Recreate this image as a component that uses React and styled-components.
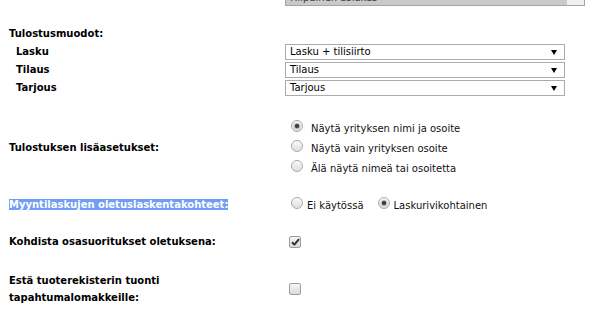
import React from 'react';
import styled, { createGlobalStyle } from 'styled-components';

const Global = createGlobalStyle`
  html, body { margin: 0; padding: 0; background: #fff; }
  body {
    font-family: "DejaVu Sans", Verdana, sans-serif;
    font-size: 10px;
    color: #000;
    overflow: hidden;
  }
`;

const Form = styled.div`
  display: flow-root;
  width: 595px;
  height: 317px;
  overflow: hidden;
  box-sizing: border-box;
  padding-left: 9px;
`;

const Row = styled.div`
  display: grid;
  grid-template-columns: 276px 1fr;
  align-items: center;
  margin-top: ${(p) => p.$gap || 0}px;
  min-height: ${(p) => p.$h || 14}px;
`;

const Label = styled.div`
  font-weight: bold;
  padding-left: ${(p) => p.$indent || 0}px;
  line-height: ${(p) => p.$lh || 14}px;
`;

const Highlight = styled.span`
  background: #6e9ef5;
  color: #fff;
`;

const ListBox = styled.div`
  box-sizing: border-box;
  width: 300px;
  height: 17px;
  border: 1px solid #a5a5a5;
  display: flex;
`;

const ListOption = styled.div`
  flex: 1;
  background: #c9c9c9;
  color: #3a3a3a;
  padding-left: 4px;
  line-height: 15px;
  white-space: nowrap;
  overflow: hidden;
`;

const ScrollTrack = styled.div`
  width: 17px;
  background: #f0f0f0;
`;

const Select = styled.div`
  box-sizing: border-box;
  width: 280px;
  height: 16px;
  border: 1px solid #ababab;
  padding: 0 7px 0 4px;
  display: flex;
  align-items: center;
  justify-content: space-between;
  background: #fff;
  line-height: 14px;
`;

const Arrow = () => (
  <svg width="6" height="5" viewBox="0 0 6 5">
    <polygon points="0,0 6,0 3,5" fill="#000" />
  </svg>
);

const RadioList = styled.div`
  display: flex;
  flex-direction: column;
`;

const Option = styled.label`
  display: flex;
  align-items: center;
  height: ${(p) => p.$h || 20}px;
`;

const Radio = styled.span`
  box-sizing: border-box;
  width: 12px;
  height: 12px;
  border-radius: 50%;
  border: 1px solid #a8a8a8;
  background: linear-gradient(#fafafa, #dcdcdc);
  box-shadow: inset 0 0 1px #fff;
  margin-left: ${(p) => p.$ml ?? 6}px;
  margin-right: ${(p) => p.$mr ?? 8}px;
  margin-bottom: 4px;
  display: flex;
  align-items: center;
  justify-content: center;
  flex: none;
  &::after {
    content: '';
    display: ${(p) => (p.$checked ? 'block' : 'none')};
    width: 4px;
    height: 4px;
    border-radius: 50%;
    background: #3c3c3c;
    box-shadow: 0 0 1.5px 0.5px #6a6a6a;
  }
`;

const OptionText = styled.span`
  color: #111;
  white-space: nowrap;
`;

const InlineOptions = styled.div`
  display: flex;
  align-items: center;
`;

const Check = styled.span`
  box-sizing: border-box;
  width: 12px;
  height: 12px;
  margin-left: 4px;
  border-radius: 2px;
  border: 1px solid #9c9c9c;
  background: linear-gradient(#f6f6f6, #dadada);
  display: flex;
  align-items: center;
  justify-content: center;
`;

const CheckMark = () => (
  <svg width="9" height="8" viewBox="0 0 9 8">
    <path d="M1 4.2 L3.4 6.6 L8 1.2" stroke="#333" strokeWidth="2" fill="none" strokeLinejoin="round" />
  </svg>
);

export default function App() {
  return (
    <>
      <Global />
      <Form>
        <Row $gap={-11} $h={17}>
          <div />
          <ListBox>
            <ListOption>Hilpainen asiakas</ListOption>
            <ScrollTrack />
          </ListBox>
        </Row>

        <Row $gap={21} $h={14}>
          <Label>Tulostusmuodot:</Label>
          <div />
        </Row>
        <Row $gap={3} $h={16}>
          <Label $indent={7}>Lasku</Label>
          <Select>
            <span>Lasku + tilisiirto</span>
            <Arrow />
          </Select>
        </Row>
        <Row $gap={2} $h={16}>
          <Label $indent={7}>Tilaus</Label>
          <Select>
            <span>Tilaus</span>
            <Arrow />
          </Select>
        </Row>
        <Row $gap={2} $h={16}>
          <Label $indent={7}>Tarjous</Label>
          <Select>
            <span>Tarjous</span>
            <Arrow />
          </Select>
        </Row>

        <Row $gap={22}>
          <Label>Tulostuksen lisäasetukset:</Label>
          <RadioList>
            <Option>
              <Radio $checked />
              <OptionText>Näytä yrityksen nimi ja osoite</OptionText>
            </Option>
            <Option>
              <Radio />
              <OptionText>Näytä vain yrityksen osoite</OptionText>
            </Option>
            <Option>
              <Radio />
              <OptionText>Älä näytä nimeä tai osoitetta</OptionText>
            </Option>
          </RadioList>
        </Row>

        <Row $gap={20} $h={14}>
          <Label>
            <Highlight>Myyntilaskujen oletuslaskentakohteet:</Highlight>
          </Label>
          <InlineOptions>
            <Option $h={14}>
              <Radio $mr={4} />
              <OptionText>Ei käytössä</OptionText>
            </Option>
            <Option $h={14}>
              <Radio $checked $ml={14} $mr={4} />
              <OptionText>Laskurivikohtainen</OptionText>
            </Option>
          </InlineOptions>
        </Row>

        <Row $gap={23} $h={14}>
          <Label>Kohdista osasuoritukset oletuksena:</Label>
          <div>
            <Check>
              <CheckMark />
            </Check>
          </div>
        </Row>

        <Row $gap={23} $h={34}>
          <Label $lh={17}>
            Estä tuoterekisterin tuonti
            <br />
            tapahtumalomakkeille:
          </Label>
          <div>
            <Check />
          </div>
        </Row>
      </Form>
    </>
  );
}
